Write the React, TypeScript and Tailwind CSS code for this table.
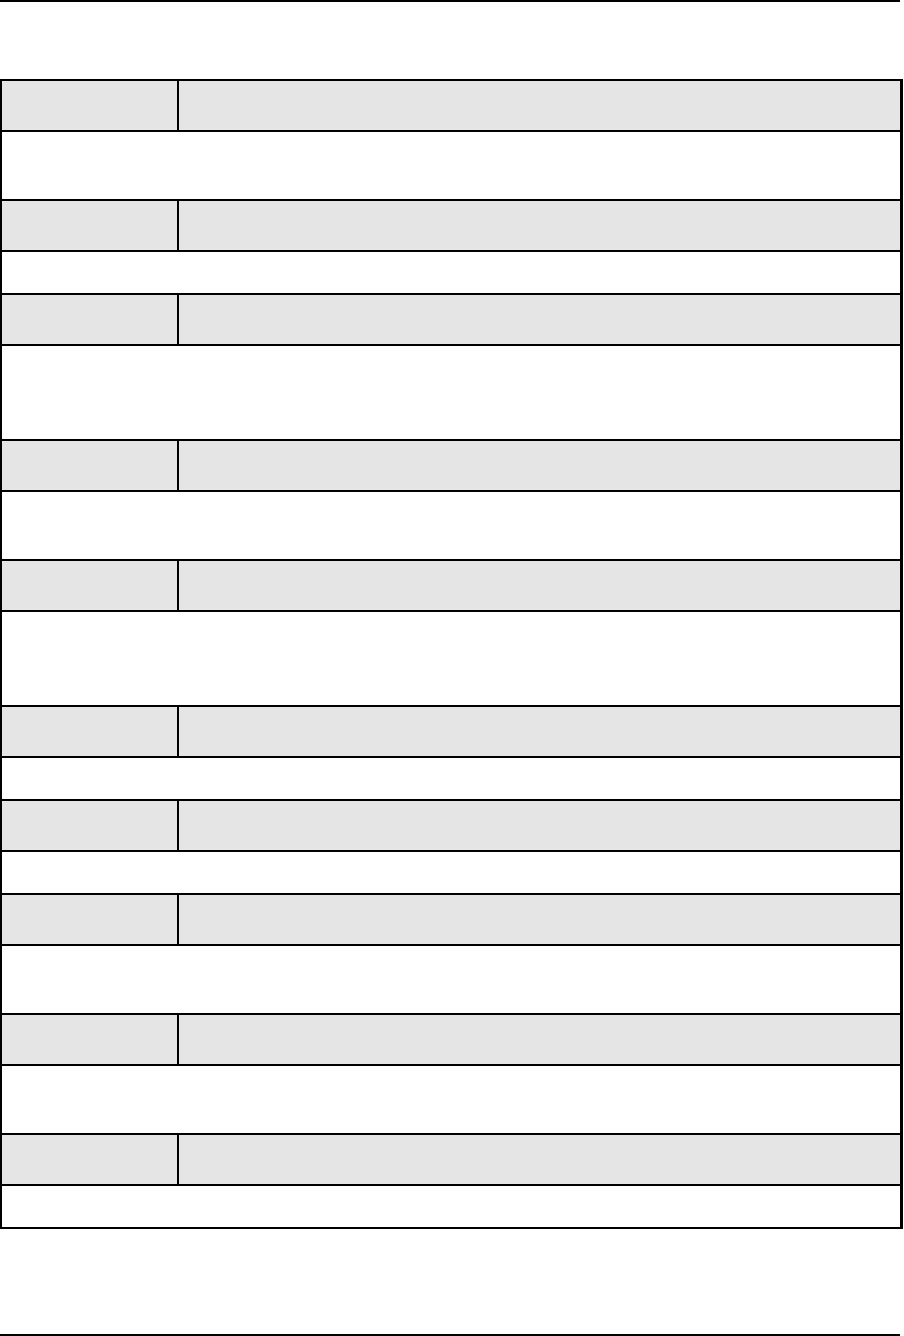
const rows = [2, 1, 3, 2, 3, 1, 1, 2, 2, 1];

const contentHeight: Record<number, string> = {
  1: "h-[43px]",
  2: "h-[69px]",
  3: "h-[95px]",
};

const App = () => {
  return (
    <div className="flex h-[1336px] w-[904px] flex-col bg-white font-['Liberation_Sans',sans-serif]">
      <div className="h-[2px] w-[900px] bg-black" />
      <div className="mt-[77px] w-[903px] border-y-2 border-l-2 border-r-[3px] border-black">
        {rows.map((lines, i) => (
          <div key={i}>
            <div
              className={`flex bg-[#e5e5e5] ${i === 0 ? "h-[49px]" : "h-[51px] border-t-2 border-black"}`}
            >
              <div className="w-[177px] border-r-2 border-black" />
              <div className="flex-1" />
            </div>
            <div
              className={`border-t-2 border-black bg-white ${contentHeight[lines]}`}
            />
          </div>
        ))}
      </div>
      <div className="mt-auto h-[2px] w-[900px] bg-black" />
    </div>
  );
};

export default App;
